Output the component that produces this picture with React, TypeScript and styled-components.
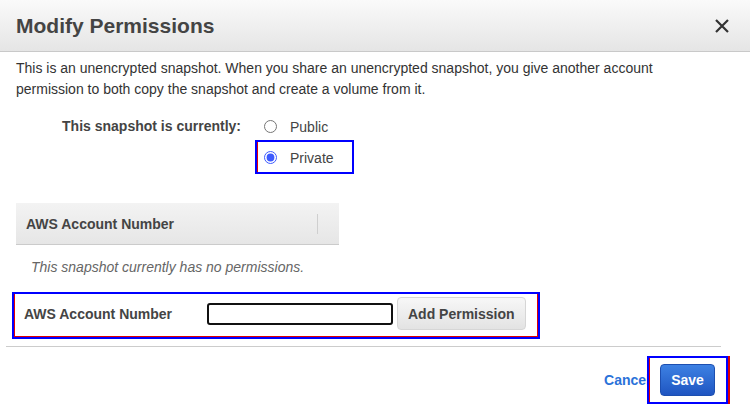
import React from "react";
import styled, { createGlobalStyle } from "styled-components";

const Global = createGlobalStyle`
    html, body {
        margin : 0;
        padding : 0;
        background : #ffffff;
    }
    body {
        font-family : "Liberation Sans", Arial, sans-serif;
        color : #444;
    }
`;

const Dialog = styled.div`
    width : 750px;
    height : 414px;
    overflow : hidden;
    background : #fff;
`;

const Header = styled.div`
    display : flex;
    justify-content: space-between;
    align-items: center;
    height : 52px;
    padding : 0px 20px 0px 16px;
    box-sizing : border-box;
    background : linear-gradient(#fafafa, #e5e5e5);
    border-bottom : 1px solid #c9c9c9;
`;

const Title = styled.h1`
    margin : 0px;
    font-size : 21px;
    font-weight : bold;
    color : #444;
`;

const Close = styled.button`
    display : flex;
    border : none;
    background : none;
    padding : 0px;
    cursor : pointer;
`;

const Body = styled.div`
    padding : 0px 16px;
`;

const Intro = styled.p`
    margin : 6px 0px 0px 0px;
    font-size : 14px;
    line-height : 21px;
    color : #333;
`;

const Status = styled.div`
    display : grid;
    grid-template-columns : 239px auto;
    margin-top : 12px;
`;

const StatusLabel = styled.div`
    font-size : 14px;
    font-weight : bold;
    color : #444;
    text-align : right;
    padding-right : 14px;
    line-height : 28px;
`;

const Options = styled.div`
    display : flex;
    flex-direction : column;
    align-items : flex-start;
`;

// blue marker box, red inner edges vary per use
const Marked = styled.div<{ $on?: boolean; $red?: string }>`
    box-sizing : border-box;
    border : 2px solid ${p => (p.$on ? "#0000ff" : "transparent")};
    box-shadow : ${p => p.$red || "none"};
`;

const Option = styled(Marked)<{ $h: number }>`
    display : flex;
    align-items : center;
    gap : 13px;
    width : 99px;
    height : ${p => p.$h}px;
    padding : 1px 0px 0px 7px;
    font-size : 14px;
    color : #444;
    & input {
        margin : 0px;
        width : 13px;
        height : 13px;
        accent-color : #3d5afe;
    }
`;

const TableHead = styled.div`
    display : flex;
    align-items : center;
    justify-content : space-between;
    width : 323px;
    height : 42px;
    margin-top : 29px;
    padding-left : 10px;
    box-sizing : border-box;
    background : linear-gradient(#f3f3f3, #e6e6e6);
    border-bottom : 1px solid #cbcbcb;
    font-size : 14px;
    font-weight : bold;
    color : #444;
`;

const Divider = styled.span`
    width : 1px;
    height : 20px;
    margin-right : 21px;
    background : #cfcfcf;
`;

const Empty = styled.div`
    margin : 14px 0px 0px 15px;
    font-size : 14px;
    font-style : italic;
    color : #666;
`;

const AddRow = styled(Marked)`
    display : flex;
    align-items : center;
    width : 528px;
    height : 47px;
    margin : 17px 0px 0px -4px;
    padding : 0px 0px 4px 10px;
`;

const FieldLabel = styled.label`
    width : 183px;
    font-size : 14px;
    font-weight : bold;
    color : #444;
`;

const Input = styled.input`
    width : 186px;
    height : 22px;
    box-sizing : border-box;
    border : 2px solid #111;
    border-radius : 3px;
    margin-right : 4px;
    outline : none;
`;

const GreyButton = styled.button`
    height : 33px;
    padding : 0px 10px;
    border : 1px solid #d6d6d6;
    border-radius : 4px;
    background : linear-gradient(#f7f7f7, #e3e3e3);
    font-family : inherit;
    font-size : 14px;
    font-weight : bold;
    color : #444;
`;

const Footer = styled.div`
    display : flex;
    justify-content : flex-end;
    align-items : center;
    margin : 7px 29px 0px 6px;
    border-top : 1px solid #cccccc;
    padding-top : 9px;
`;

const Cancel = styled.a`
    font-size : 14px;
    font-weight : bold;
    color : #2a72d9;
    text-decoration : none;
    margin-right : -3px;
`;

const SaveBox = styled(Marked)`
    display : flex;
    align-items : center;
    justify-content : center;
    width : 81px;
    height : 48px;
    margin-right : -7px;
`;

const SaveButton = styled.button`
    height : 32px;
    padding : 0px 10px;
    border : 1px solid #1d4fb0;
    border-radius : 4px;
    background : linear-gradient(#3d81e3, #1f55c1);
    font-family : inherit;
    font-size : 14px;
    font-weight : bold;
    color : #fff;
`;

function App() {
    return (
        <Dialog>
            <Global />
            <Header>
                <Title>Modify Permissions</Title>
                <Close aria-label="Close">
                    <svg width="16" height="16" viewBox="0 0 16 16">
                        <path d="M2 2 L14 14 M14 2 L2 14" stroke="#333" strokeWidth="2.2" />
                    </svg>
                </Close>
            </Header>
            <Body>
                <Intro>
                    This is an unencrypted snapshot. When you share an unencrypted snapshot, you give another account
                    <br />
                    permission to both copy the snapshot and create a volume from it.
                </Intro>
                <Status>
                    <StatusLabel>This snapshot is currently:</StatusLabel>
                    <Options>
                        <Option $h={28}>
                            <input type="radio" name="share" />
                            <span>Public</span>
                        </Option>
                        <Option $h={34} $on $red="inset 1px 0 0 #e00000">
                            <input type="radio" name="share" defaultChecked />
                            <span>Private</span>
                        </Option>
                    </Options>
                </Status>
                <TableHead>
                    AWS Account Number
                    <Divider />
                </TableHead>
                <Empty>This snapshot currently has no permissions.</Empty>
                <AddRow $on $red="inset 1px -1px 0 #e00000, inset -1px 0 0 #e00000">
                    <FieldLabel>AWS Account Number</FieldLabel>
                    <Input type="text" />
                    <GreyButton>Add Permission</GreyButton>
                </AddRow>
            </Body>
            <Footer>
                <Cancel href="#">Cancel</Cancel>
                <SaveBox $on $red="inset 1px 0 0 #e00000, 2px 0 0 #e00000">
                    <SaveButton>Save</SaveButton>
                </SaveBox>
            </Footer>
        </Dialog>
    );
}

export default App;
